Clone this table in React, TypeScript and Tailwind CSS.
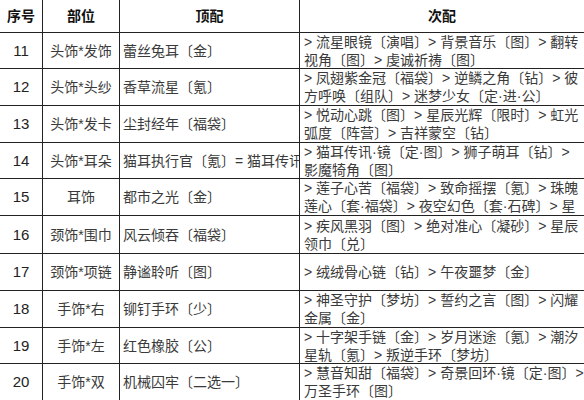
const rows = [
  { no: '11', part: '头饰*发饰', top: '蕾丝兔耳〔金〕', sub: ['> 流星眼镜〔演唱〕> 背景音乐〔图〕> 翻转', '视角〔图〕> 虔诚祈祷〔图〕'], h: 'h-[36px]' },
  { no: '12', part: '头饰*头纱', top: '香草流星〔氪〕', sub: ['> 凤翅紫金冠〔福袋〕> 逆鳞之角〔钻〕> 彼', '方呼唤〔组队〕> 迷梦少女〔定·进·公〕'], h: 'h-[37px]' },
  { no: '13', part: '头饰*发卡', top: '尘封经年〔福袋〕', sub: ['> 悦动心跳〔图〕> 星辰光辉〔限时〕> 虹光', '弧度〔阵营〕> 吉祥蒙空〔钻〕'], h: 'h-[37px]' },
  { no: '14', part: '头饰*耳朵', top: '猫耳执行官〔氪〕= 猫耳传讯', sub: ['> 猫耳传讯·镜〔定·图〕> 狮子萌耳〔钻〕>', '影魔犄角〔图〕'], h: 'h-[36px]' },
  { no: '15', part: '耳饰', top: '都市之光〔金〕', sub: ['> 莲子心苦〔福袋〕> 致命摇摆〔氪〕> 珠魄', '莲心〔套·福袋〕> 夜空幻色〔套·石碑〕> 星'], h: 'h-[37px]' },
  { no: '16', part: '颈饰*围巾', top: '风云倾吞〔福袋〕', sub: ['> 疾风黑羽〔图〕> 绝对准心〔凝砂〕> 星辰', '领巾〔兑〕'], h: 'h-[38px]' },
  { no: '17', part: '颈饰*项链', top: '静谧聆听〔图〕', sub: ['> 绒绒骨心链〔钻〕> 午夜噩梦〔金〕'], h: 'h-[37px]' },
  { no: '18', part: '手饰*右', top: '铆钉手环〔少〕', sub: ['> 神圣守护〔梦坊〕> 誓约之言〔图〕> 闪耀', '金属〔金〕'], h: 'h-[37px]' },
  { no: '19', part: '手饰*左', top: '红色橡胶〔公〕', sub: ['> 十字架手链〔金〕> 岁月迷途〔氪〕> 潮汐', '星轨〔氪〕> 叛逆手环〔梦坊〕'], h: 'h-[36px]' },
  { no: '20', part: '手饰*双', top: '机械囚牢〔二选一〕', sub: ['> 慧音知甜〔福袋〕> 奇景回环·镜〔定·图〕>', '万圣手环〔图〕'], h: 'h-[37px]' },
]

const cols = 'grid grid-cols-[43px_77px_180px_1fr]'

export default function App() {
  return (
    <div
      className="w-[584px] h-[400px] overflow-hidden bg-white text-[14px] text-[#3a3a3a] leading-[18px]"
      style={{ fontFamily: '"Liberation Sans", "Noto Sans CJK SC", sans-serif' }}
    >
      {/* header */}
      <div className={`${cols} h-[33px] border-b border-[#222] font-bold text-[#111]`}>
        <div className="flex items-center justify-center border-r border-[#222]">序号</div>
        <div className="flex items-center justify-center border-r border-[#222]">部位</div>
        <div className="flex items-center justify-center border-r border-[#222]">顶配</div>
        <div className="flex items-center justify-center">次配</div>
      </div>

      {rows.map(r => (
        <div key={r.no} className={`${cols} ${r.h} border-b border-[#222]`}>
          <div className="flex items-center justify-center border-r border-[#222] text-[15px] text-[#222]">{r.no}</div>
          <div className="flex items-center justify-center border-r border-[#222] whitespace-nowrap">{r.part}</div>
          <div className="flex items-center border-r border-[#222] pl-[3px] whitespace-nowrap overflow-hidden">{r.top}</div>
          <div className="flex flex-col justify-center pl-[4px] whitespace-nowrap overflow-hidden">
            {r.sub.map((line, i) => (
              <div key={i}>{line}</div>
            ))}
          </div>
        </div>
      ))}
    </div>
  )
}
